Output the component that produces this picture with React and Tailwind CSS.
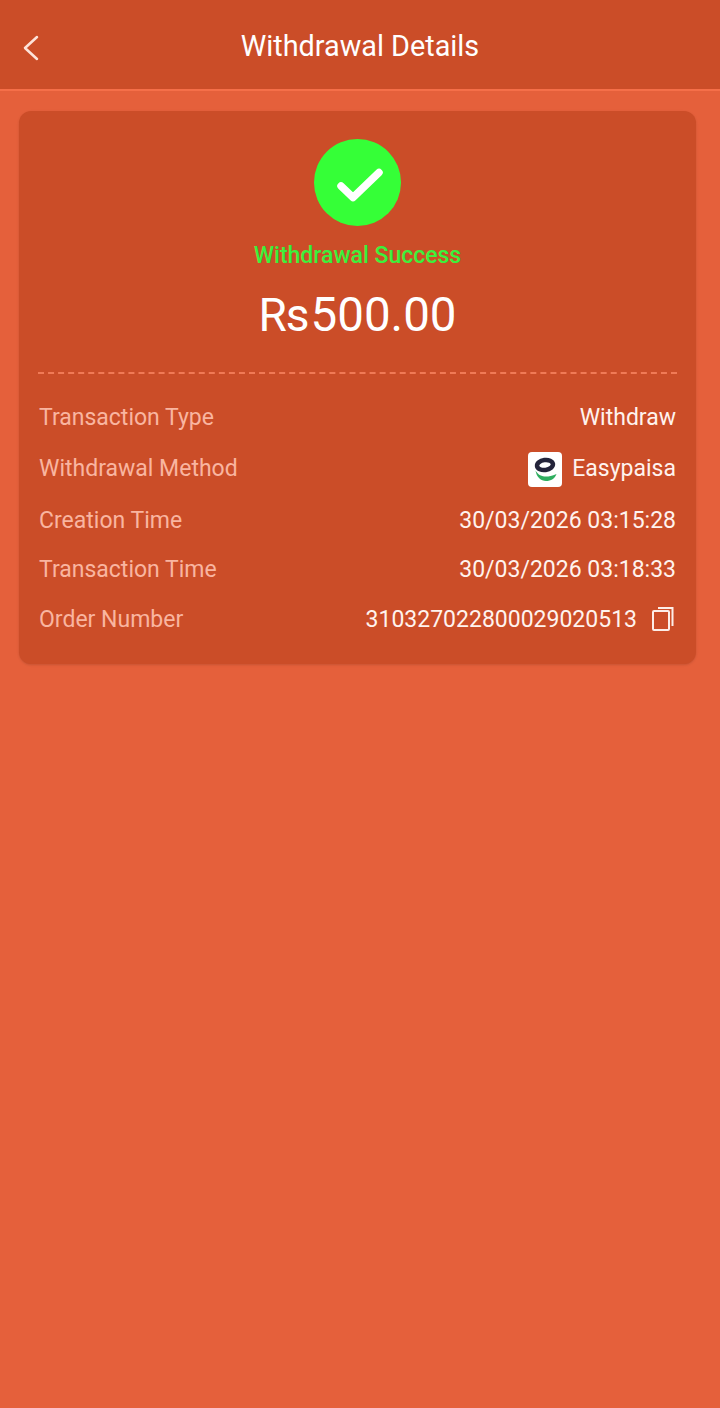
const rows = [
  { label: 'Transaction Type', value: 'Withdraw', height: 'h-[50px]' },
  { label: 'Withdrawal Method', value: 'Easypaisa', logo: true, height: 'h-[53px]' },
  { label: 'Creation Time', value: '30/03/2026 03:15:28', height: 'h-[50px]' },
  { label: 'Transaction Time', value: '30/03/2026 03:18:33', height: 'h-[49px]' },
  { label: 'Order Number', value: '310327022800029020513', copy: true, height: 'h-[50px]' },
];

function EasypaisaLogo() {
  return (
    <div className="w-[34px] h-[35px] rounded-[4px] bg-white flex items-center justify-center">
      <svg width="28" height="29" viewBox="0 0 28 29" fill="none">
        <ellipse cx="14" cy="10" rx="8" ry="5" transform="rotate(-8 14 10)" stroke="#24243a" strokeWidth="4.5" />
        <path d="M4.5 15.5C5.5 22 10 26 15 26C20 26 24 23.5 25.5 19C21 21 18 21.5 15 21.5C11 21.5 7 20 4.5 15.5Z" fill="#2fae5f" />
      </svg>
    </div>
  );
}

function CopyIcon() {
  return (
    <svg width="22" height="24" viewBox="0 0 22 24" fill="none" stroke="#fdeee8" strokeWidth="2">
      <rect x="1" y="4" width="16" height="19" rx="1" />
      <path d="M6 1H20.5V19" />
    </svg>
  );
}

export default function App() {
  return (
    <div className="min-h-[1408px] bg-[#e5603b] font-['Roboto',sans-serif]">
      <header className="h-[91px] bg-[#cb4d28] border-b-2 border-[#f56f49] flex items-center relative pt-[5px]">
        <svg className="absolute left-[20px] top-[34px]" width="22" height="28" viewBox="0 0 22 28" fill="none">
          <path d="M17 3L5 14L17 25" stroke="#fde3da" strokeWidth="2.5" strokeLinecap="round" strokeLinejoin="round" />
        </svg>
        <h1 className="w-full text-center text-[28.8px] text-white">Withdrawal Details</h1>
      </header>
      <main className="pl-[19px] pt-[20px] pr-[24px]">
        <section className="h-[553px] bg-[#cb4d28] rounded-[12px] shadow-sm px-[19px] pt-[28px] flex flex-col">
          <div className="flex flex-col items-center">
            <div className="w-[87px] h-[87px] rounded-full bg-[#35ff37] flex items-center justify-center">
              <svg width="52" height="42" viewBox="0 0 52 42" fill="none">
                <path d="M9 24L21 35.5L47 10.5" stroke="#fff" strokeWidth="7.5" strokeLinecap="round" strokeLinejoin="round" />
              </svg>
            </div>
            <p className="mt-[15px] text-[23px] leading-[29px] font-medium text-[#3cf03c]">Withdrawal Success</p>
            <p className="mt-[16px] leading-[58px] text-white flex items-baseline">
              <span className="text-[46px] mr-[2px] tracking-[-1px]">Rs</span>
              <span className="text-[47.5px]">500.00</span>
            </p>
          </div>
          <div className="mt-[28px] border-t-2 border-dashed border-[#f07a56]" />
          <div className="mt-[19px] pl-[1px] pr-[1px] flex flex-col">
            {rows.map((row) => (
              <div key={row.label} className={`${row.height} flex items-center justify-between text-[23px]`}>
                <span className="text-[#f9b5a0]">{row.label}</span>
                <span className="flex items-center text-[#fff3ee]">
                  {row.logo && <span className="mr-[10px]"><EasypaisaLogo /></span>}
                  {row.value}
                  {row.copy && <span className="ml-[15px] mr-[2px] -mt-[2px]"><CopyIcon /></span>}
                </span>
              </div>
            ))}
          </div>
        </section>
      </main>
    </div>
  );
}
